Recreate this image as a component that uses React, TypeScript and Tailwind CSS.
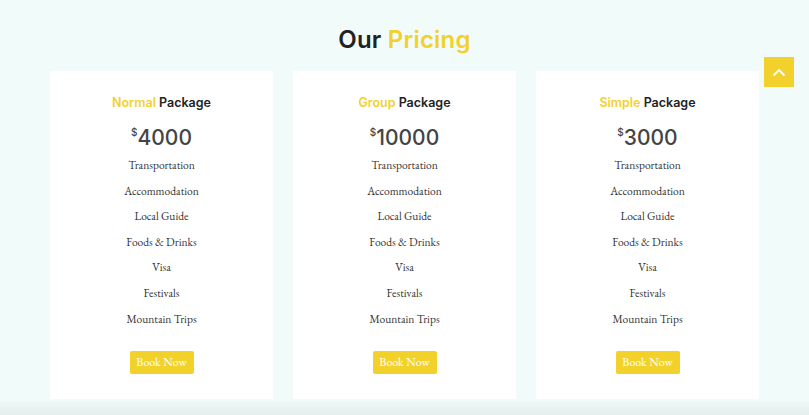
import React from "react";

const plans = [
  { name: "Normal", price: "4000" },
  { name: "Group", price: "10000" },
  { name: "Simple", price: "3000" },
];
const items = ["Transportation", "Accommodation", "Local Guide", "Foods & Drinks", "Visa", "Festivals", "Mountain Trips"];

export default function App() {
  return (
    <div className="relative w-[809px] h-[415px] overflow-hidden bg-[#f1fcfa]">
      <div className="pt-[24px] flex flex-col items-center">
        <h2 className="text-[24px] leading-[32px] font-semibold text-[#222] tracking-[0.2px]" style={{ fontFamily: "Inter, 'Open Sans', sans-serif" }}>
          Our <span className="text-[#f2d12c]">Pricing</span>
        </h2>
        <div className="mt-[15px] grid grid-cols-3 gap-[20px] w-[709px]">
          {plans.map((p) => (
            <div key={p.name} className="bg-white h-[328px] flex flex-col items-center pt-[25px]">
              <div className="text-[12.5px] leading-[14px] font-semibold text-[#222]" style={{ fontFamily: "Inter, 'Open Sans', sans-serif" }}>
                <span className="text-[#f2d12c]">{p.name}</span> Package
              </div>
              <div className="mt-[16px] flex items-start text-[#444]" style={{ fontFamily: "Inter, 'Open Sans', sans-serif" }}>
                <span className="text-[10px] leading-[10px] font-medium mt-[1px]">$</span>
                <span className="text-[21px] leading-[24px] font-medium">{p.price}</span>
              </div>
              <div className="mt-[2px] flex flex-col items-center" style={{ fontFamily: "'EB Garamond', 'Liberation Serif', serif" }}>
                {items.map((it) => (
                  <div key={it} className="text-[11.5px] leading-[25.6px] text-[#333]">{it}</div>
                ))}
              </div>
              <button className="mt-[20px] w-[64px] h-[23px] rounded-[2px] bg-[#f2d22a] text-white text-[12px] leading-[23px]" style={{ fontFamily: "'EB Garamond', 'Liberation Serif', serif" }}>
                Book Now
              </button>
            </div>
          ))}
        </div>
      </div>
      <div className="absolute left-0 right-0 bottom-0 h-[14px] bg-gradient-to-b from-[#eef9f7] to-[#e3efed]" />
      <div className="absolute left-[764px] top-[57px] w-[30px] h-[30px] bg-[#f2d12c] flex items-center justify-center">
        <svg width="14" height="9" viewBox="0 0 14 9" fill="none">
          <path d="M1.5 7.5 L7 2 L12.5 7.5" stroke="white" strokeWidth="1.8" />
        </svg>
      </div>
    </div>
  );
}
